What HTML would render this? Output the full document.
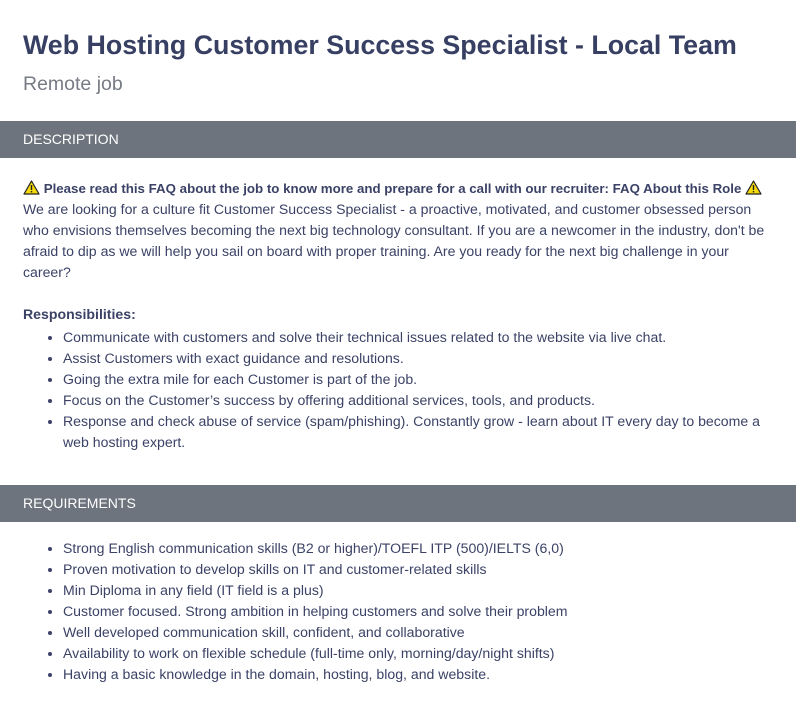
<!DOCTYPE html>
<html><head><meta charset="utf-8"><style>
*{margin:0;padding:0;box-sizing:border-box}
body{width:796px;height:714px;background:#fff;font-family:"Liberation Sans",sans-serif;color:#3b4266;overflow:hidden;position:relative}
.t{position:absolute;left:23px;top:30px;font-size:26.8px;font-weight:bold;color:#373f63;white-space:nowrap}
.s{position:absolute;left:23px;top:73px;font-size:19.5px;color:#777b84}
.bar{position:absolute;left:0;width:796px;height:37px;background:#6d747e;color:#fff;font-size:14px;padding-left:23px;line-height:37px}
.p{position:absolute;left:23px;font-size:14.1px;line-height:21px;white-space:nowrap}
.p b.h{font-size:13.3px}
ul{position:absolute;left:63px;list-style:none;font-size:14.1px;line-height:21px;white-space:nowrap}
li{position:relative}
li:before{content:"";position:absolute;left:-15px;top:9px;width:4px;height:4px;border-radius:50%;background:#3b4266}
.w{display:inline-block;vertical-align:-2px}
</style></head><body>
<div class="t">Web Hosting Customer Success Specialist - Local Team</div>
<div class="s">Remote job</div>
<div class="bar" style="top:121px">DESCRIPTION</div>
<div class="p" style="top:178px"><b class="h"><svg class="w" width="17" height="15" viewBox="0 0 17 15"><path d="M8.5 1L16 14H1Z" fill="#f5d90a" stroke="#222" stroke-width="1.2" stroke-linejoin="round"/><rect x="7.8" y="5" width="1.4" height="5" fill="#222"/><rect x="7.8" y="11" width="1.4" height="1.4" fill="#222"/></svg> Please read this FAQ about the job to know more and prepare for a call with our recruiter: FAQ About this Role <svg class="w" width="17" height="15" viewBox="0 0 17 15"><path d="M8.5 1L16 14H1Z" fill="#f5d90a" stroke="#222" stroke-width="1.2" stroke-linejoin="round"/><rect x="7.8" y="5" width="1.4" height="5" fill="#222"/><rect x="7.8" y="11" width="1.4" height="1.4" fill="#222"/></svg></b><br>
We are looking for a culture fit Customer Success Specialist - a proactive, motivated, and customer obsessed person<br>
who envisions themselves becoming the next big technology consultant. If you are a newcomer in the industry, don't be<br>
afraid to dip as we will help you sail on board with proper training. Are you ready for the next big challenge in your<br>
career?<br><br>
<b>Responsibilities:</b></div>
<ul style="top:327px">
<li>Communicate with customers and solve their technical issues related to the website via live chat.</li>
<li>Assist Customers with exact guidance and resolutions.</li>
<li>Going the extra mile for each Customer is part of the job.</li>
<li>Focus on the Customer’s success by offering additional services, tools, and products.</li>
<li>Response and check abuse of service (spam/phishing). Constantly grow - learn about IT every day to become a<br>web hosting expert.</li>
</ul>
<div class="bar" style="top:485px">REQUIREMENTS</div>
<ul style="top:538px">
<li>Strong English communication skills (B2 or higher)/TOEFL ITP (500)/IELTS (6,0)</li>
<li>Proven motivation to develop skills on IT and customer-related skills</li>
<li>Min Diploma in any field (IT field is a plus)</li>
<li>Customer focused. Strong ambition in helping customers and solve their problem</li>
<li>Well developed communication skill, confident, and collaborative</li>
<li>Availability to work on flexible schedule (full-time only, morning/day/night shifts)</li>
<li>Having a basic knowledge in the domain, hosting, blog, and website.</li>
</ul>
</body></html>
